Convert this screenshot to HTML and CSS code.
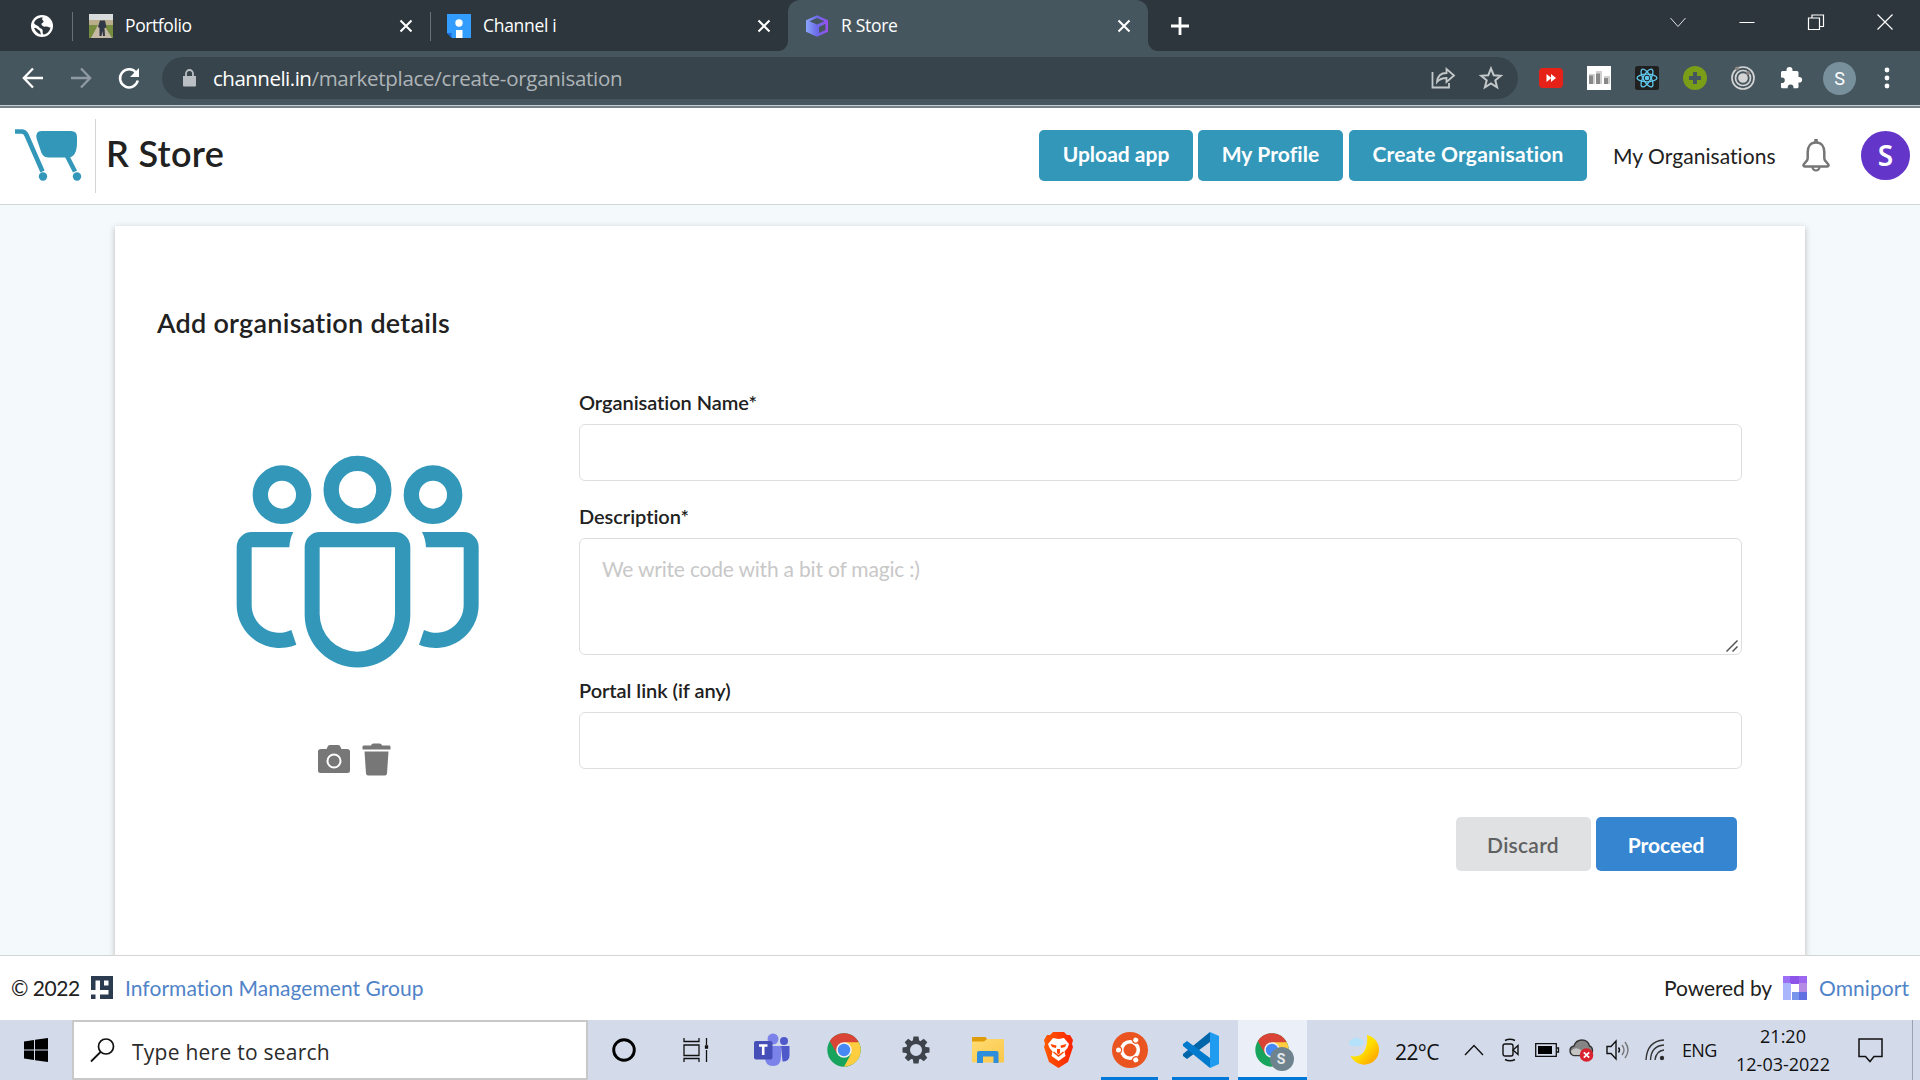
FILE: index.html
```html
<!DOCTYPE html>
<html lang="en">
<head>
<meta charset="utf-8">
<title>R Store</title>
<link rel="stylesheet" href="styles.css">
</head>
<body>
<svg class="defs" width="0" height="0">
  <defs>
    <linearGradient id="cube" x1="0" x2="1"><stop offset="0" stop-color="#8aa6fb"/><stop offset=".5" stop-color="#6b6ae8"/><stop offset="1" stop-color="#9a4ef0"/></linearGradient>
    <linearGradient id="fold" x1="0" x2="1" y2="1"><stop offset="0" stop-color="#ffdc72"/><stop offset="1" stop-color="#f9c74a"/></linearGradient>
    <linearGradient id="lion" x1="0" x2="1"><stop offset="0" stop-color="#ff5a00"/><stop offset="1" stop-color="#fb2200"/></linearGradient>
    <linearGradient id="moon" x1="0" x2="1" y2="1"><stop offset="0" stop-color="#ffec00"/><stop offset=".5" stop-color="#ffde00"/><stop offset="1" stop-color="#ff9000"/></linearGradient>
    <symbol id="chrome" viewBox="0 0 34 34">
      <circle cx="17" cy="17" r="16.7" fill="#18a45c"/>
      <path d="M17 17L2.800 8A16.700 16.700 0 0 1 31.800 9.200z" fill="#da4437"/>
      <path d="M17 9.200H31.800A16.700 16.700 0 0 1 17 33.700L24 21z" fill="#ffcd40"/>
      <path d="M2.800 8L10.200 21 17 17V9.200z" fill="#da4437"/>
      <circle cx="17" cy="17" r="7.800" fill="#f1f1f1"/><circle cx="17" cy="17" r="6.200" fill="#4688f4"/>
    </symbol>
    <symbol id="x" viewBox="0 0 14 14"><path d="M1.500 1.500L12.500 12.500M12.500 1.500L1.500 12.500" stroke="#fff" stroke-width="2.100" fill="none"/></symbol>
  </defs>
</svg>

<div class="tabs">
  <div class="tab pinned">
    <svg width="22" height="22" viewBox="0 0 22 22"><circle cx="11" cy="11" r="11" fill="#fff"/><path d="M12 2.500C8 2 4 4.500 3 8C4 10.500 7 10 8 12C9 14 11 13 11.500 15C12 17 11 18 12.500 19.500C16 19 19 16 19.500 12.500C18 13 17 11 15 11.500C13 12 11 11 10.500 9.500C10 8 13 8 12.500 6C12 5 10 4.500 12 2.500z" fill="#2c363c"/><path d="M3 13C5 17 7 19 10 19.500L9 16L5 13z" fill="#2c363c"/></svg>
  </div>
  <div class="tab">
    <svg class="fav" viewBox="0 0 24 24"><path fill="#d9dcdc" d="M0 0h24v9H0z"/><path fill="#b9ad8c" d="M0 6h24v5H0z"/><path fill="#768c3f" d="M0 11h24v13H0z"/><path fill="#c6b9a5" d="M9 11h6l8 13H2z"/><path fill="#303747" d="M11 6.500h5l1.500 7-2 .5.500 8h-2l-.5-5-1 5h-2V14l-1.500-1z"/></svg>
    <span class="tab-name ls-port">Portfolio</span><svg class="close"><use href="#x"/></svg>
  </div>
  <div class="tab">
    <svg class="fav" viewBox="0 0 24 24"><path fill="#339cff" d="M0 0h24v24H5L0 19z"/><path fill="#1b69d6" d="M0 19h4.500v5z"/><circle cx="12" cy="9" r="3.700" fill="#fff"/><path fill="#fff" d="M9 16h6.500v8H9z"/></svg>
    <span class="tab-name ls-chan">Channel i</span><svg class="close"><use href="#x"/></svg>
  </div>
  <div class="tab active">
    <svg class="fav" viewBox="0 0 24 24"><path fill="url(#cube)" fill-rule="evenodd" d="M12 1.300l11 5v11.500l-11 5-11-5V6.300zM12 4L4.500 7.200 12 10.500l7.500-3.300zM14 13v6l6.500-3V9.800z"/></svg>
    <span class="tab-name ls-store">R Store</span><svg class="close"><use href="#x"/></svg>
  </div>
  <svg class="newtab" width="20" height="20" viewBox="0 0 20 20"><path d="M10 1v18M1 10h18" stroke="#fff" stroke-width="2.800"/></svg>
  <div class="window-controls">
    <svg width="16" height="16"><path d="M.5 4L8 12.500 15.500 4" stroke="#dfe2e4" fill="none"/></svg>
    <svg width="16" height="16"><path d="M.5 8.500h15" stroke="#fff"/></svg>
    <svg width="16" height="16"><path d="M.5 4h11v11.500H.5zM4 4V1h11.500v11.500h-4" stroke="#fff" stroke-width="1.200" fill="none"/></svg>
    <svg width="16" height="16"><path d="M.5.5l15 15M15.500.5l-15 15" stroke="#fff" stroke-width="1.200"/></svg>
  </div>
</div>

<div class="toolbar">
  <svg class="ic"><path d="M22 12H3M12 2.500L2.800 12l9.200 9.500" stroke="#fff" stroke-width="2.300" fill="none"/></svg>
  <svg class="ic"><path d="M2 12h19M12 2.500l9.200 9.500-9.200 9.500" stroke="#8f9aa2" stroke-width="2.300" fill="none"/></svg>
  <svg class="ic"><path d="M19.300 7A9 9 0 1 0 20.800 14.500" stroke="#fff" stroke-width="2.500" fill="none"/><path d="M22 2v9h-9z" fill="#fff"/></svg>
  <div class="omnibox">
    <svg width="13" height="18"><path d="M0 7h13v9.500q0 1-1 1H1q-1 0-1-1z" fill="#babfc3"/><path d="M3 8V4.500a3.500 3.500 0 0 1 7 0V8" stroke="#babfc3" stroke-width="1.800" fill="none"/></svg>
    <span class="url"><b>channeli.in</b><i>/marketplace/create-organisation</i></span>
    <svg class="ic"><path d="M1.500 6v15.500H18V17" stroke="#c3c8cb" stroke-width="1.800" fill="none"/><path d="M6 16c.5-6 4-9 9.500-9V3L23 9.500 15.500 16v-4C11 12 8.500 13 6 16z" stroke="#c3c8cb" stroke-width="1.800" fill="none"/></svg>
    <svg class="ic"><path d="M12 2.500l2.700 6.700 7.100.5-5.500 4.600 1.800 7-6.100-3.800-6.100 3.800 1.800-7L2.200 9.700l7.100-.5z" stroke="#c3c8cb" stroke-width="2" fill="none"/></svg>
  </div>
  <div class="extensions">
    <svg class="ic"><rect y="2" width="24" height="20" rx="4" fill="#e62117"/><path d="M7.500 8l5 4-5 4zM12 8l5 4-5 4z" fill="#fff"/></svg>
    <svg class="ic"><path fill="#fff" d="M0 0h24v24H0z"/><path fill="#d0d0d0" d="M2 8h6v10H2zM9 5h6v13H9zM17 10h6v8h-6z"/><path fill="#888" d="M2 9.500h4V18H2zM9 7.500h4V18H9zM17 12h4v6h-4z"/></svg>
    <svg class="ic" fill="none" stroke="#61c9ee" stroke-width="1.300"><rect width="24" height="24" rx="2.500" fill="#202020" stroke="none"/><ellipse cx="12" cy="12" rx="10" ry="3.800"/><ellipse cx="12" cy="12" rx="10" ry="3.800" transform="rotate(60 12 12)"/><ellipse cx="12" cy="12" rx="10" ry="3.800" transform="rotate(120 12 12)"/><circle cx="12" cy="12" r="1.600" fill="#61c9ee"/></svg>
    <svg class="ic"><circle cx="12" cy="12" r="12" fill="#7b9e18"/><path d="M12 6v12M6 12h12" stroke="#46565f" stroke-width="4"/></svg>
    <svg class="ic" fill="none" stroke="#d4d4d4" stroke-width="1.700"><circle cx="12" cy="12" r="11"/><circle cx="12" cy="12" r="7.500"/><circle cx="12" cy="12" r="4" fill="#d4d4d4"/><circle cx="6" cy="2.500" r="2" fill="#8c8582" stroke="none"/><circle cx="17" cy="7" r="2" fill="#8c8582" stroke="none"/></svg>
    <svg class="ic"><path d="M2 6.500q0-1.500 1.500-1.500H7.500V4a3 3 0 0 1 6 0v1H18q1.500 0 1.500 1.500V11h.8a2.800 2.800 0 0 1 0 5.600h-.8V21q0 1.300-1.500 1.300h-3.500v-1a2.900 2.900 0 0 0-5.800 0v1H3.500Q2 22.300 2 21v-4h1a2.800 2.800 0 0 0 0-5.600H2z" fill="#fff"/></svg>
    <span class="profile">S</span>
    <svg class="ic" fill="#fff"><circle cx="12" cy="4" r="2.400"/><circle cx="12" cy="12" r="2.400"/><circle cx="12" cy="20" r="2.400"/></svg>
  </div>
</div>

<header class="app-header">
  <svg width="68" height="54" viewBox="0 0 68 54"><path d="M0 3.500H6.500Q10 3.500 11.500 7L27.500 43.500" stroke="#3397ba" stroke-width="4.600" fill="none"/><path d="M26.500 3H56Q62 3 62 9V14Q62 29.500 53 29.500H34Q28.500 29.500 26.500 25L21.700 11Q20 3 26.500 3z" fill="#3397ba"/><path d="M52 28L60 43.500" stroke="#3397ba" stroke-width="4.500"/><circle cx="28" cy="48.500" r="4.200" fill="#3397ba"/><circle cx="62" cy="48.500" r="4.200" fill="#3397ba"/></svg>
  <h1 class="app-name">R Store</h1>
  <nav class="nav">
    <button class="teal upload">Upload app</button>
    <button class="teal prof">My Profile</button>
    <button class="teal create">Create Organisation</button>
  </nav>
  <span class="my-orgs">My Organisations</span>
  <svg class="bell" width="28" height="33" viewBox="0 0 28 33"><path d="M14 3.500C8.500 3.500 5.700 7.500 5.700 13V19.500C5.700 22.500 1.500 24 1.500 26.300Q1.500 27.500 3 27.500H25Q26.500 27.500 26.500 26.300C26.500 24 22.300 22.500 22.300 19.500V13C22.300 7.500 19.500 3.500 14 3.500z" stroke="#767676" stroke-width="2.500" fill="none"/><path d="M14 0v4" stroke="#767676" stroke-width="3.600"/><path d="M10.500 28a3.500 3.500 0 0 0 7 0" stroke="#767676" stroke-width="2.200" fill="none"/></svg>
  <span class="user">S</span>
</header>

<main class="page">
  <section class="card">
    <h2 class="card-title">Add organisation details</h2>
    <div class="card-body">
      <div class="logo-picker">
        <svg width="250" height="217" viewBox="100 70 750 651" fill="#3397ba">
          <g fill="none" stroke="#3397ba" stroke-width="46"><circle cx="473.500" cy="180" r="79"/><circle cx="247" cy="195" r="65"/><circle cx="700" cy="195" r="65"/></g>
          <path fill-rule="evenodd" d="M360 307H587A45 45 0 0 1 632 352V555A158.500 158.500 0 0 1 315 555V352A45 45 0 0 1 360 307zM360 353V553A113 113 0 0 0 586 553V353z"/>
          <path id="side" d="M281 307H156A45 45 0 0 0 111 352V525A129 129 0 0 0 290 645L275 601A83 83 0 0 1 156 525V353H269Q270 328 281 307z"/>
          <use href="#side" transform="translate(948 0) scale(-1 1)"/>
        </svg>
        <div class="logo-actions">
          <svg width="32" height="32" viewBox="0 0 32 32"><path fill="#777" d="M3 6H8.500L10 3Q10.500 2 12 2H20Q21.500 2 22 3L23.500 6H29Q32 6 32 8.500V27.500Q32 30 29.500 30H2.500Q0 30 0 27.500V8.500Q0 6 3 6z"/><circle cx="16" cy="18" r="6.500" stroke="#fff" stroke-width="2" fill="none"/></svg>
          <svg width="29" height="33" viewBox="0 0 29 33"><path fill="#777" d="M1.500 2.500H9Q9.500.5 11.500.500H17.500Q19.500.5 20 2.500H27.500Q28.500 2.500 28.500 4V6.500H.500V4Q.500 2.500 1.500 2.500zM2.500 8.500H26.500L25 30.500Q24.700 32.500 23 32.500H6Q4.300 32.500 4 30.500z"/></svg>
        </div>
      </div>
      <form class="form">
        <label class="field"><span class="label">Organisation Name*</span><input class="control" type="text"></label>
        <label class="field"><span class="label">Description*</span><span class="area-wrap"><textarea class="control area" placeholder="We write code with a bit of magic :)"></textarea><svg class="grip" width="12" height="12"><path d="M.5 11.500l11-11M6.500 11.500l5-5" stroke="#555" stroke-width="1.500"/></svg></span></label>
        <label class="field"><span class="label">Portal link (if any)</span><input class="control" type="text"></label>
        <div class="actions"><button type="button" class="discard">Discard</button><button type="button" class="proceed">Proceed</button></div>
      </form>
    </div>
  </section>
</main>

<footer class="site-footer">
  <span class="copy">© 2022</span>
  <svg class="img-logo" width="22" height="23" viewBox="0 0 22 23"><path fill="#2b3b50" fill-rule="evenodd" d="M0 0H22V23H9V18.500H17.500V14H9V4.500H4.500V14H0zM13 4.500V9.500H17.500V4.500zM0 18.500H4.500V23H0z"/></svg>
  <a>Information Management Group</a>
  <span class="powered">Powered by</span>
  <svg class="omni-logo" width="24" height="24" viewBox="0 0 24 24"><path fill="#9b6ff5" d="M0 0h8v8H0z"/><path fill="#8c54e8" d="M7 0h10v8H7z"/><path fill="#9d66ee" d="M16 0h8v8h-8z"/><path fill="#a9b6fd" d="M0 7h8v17H0z"/><path fill="#b48ae4" d="M16 7h8v10h-8z"/><path fill="#7795ea" d="M9 16h8v8H9z"/><path fill="#616fe0" d="M16 16h8v8h-8z"/></svg>
  <a>Omniport</a>
</footer>

<div class="taskbar">
  <div class="task start"><svg width="24" height="24"><path d="M0 3.500L10 2v9.500H0zM11 1.800L24 0v11.500H11zM0 12.500h10V22L0 20.500zM11 12.500h13V24l-13-1.800z"/></svg></div>
  <div class="search"><svg width="24" height="24"><circle cx="16" cy="8.500" r="7.500" stroke="#111" stroke-width="1.700" fill="none"/><path d="M10.500 14L1 23.500" stroke="#111" stroke-width="1.800"/></svg><span>Type here to search</span></div>
  <div class="task"><svg width="24" height="24"><circle cx="12" cy="12" r="10.300" stroke="#000" stroke-width="2.900" fill="none"/></svg></div>
  <div class="task"><svg width="26" height="24" fill="none" stroke="#111" stroke-width="1.300"><path d="M1 0v3.500h15V0M1 7h15v10.500H1zM1 24v-3.500h15V24M23.500 0v7M23.500 12v12"/><path fill="#111" d="M22.500 8h2v2h-2z"/></svg></div>
  <div class="task teams"><svg width="36" height="34" viewBox="0 0 36 34"><circle cx="30" cy="8" r="4" fill="#5059c9"/><path d="M27 13h8.500v9.500q0 6-7 6z" fill="#5059c9"/><circle cx="19" cy="6" r="5.500" fill="#7b83eb"/><path d="M11 13h16v11q0 9-8 9t-8-9z" fill="#7b83eb"/><rect y="8" width="18.500" height="18.500" rx="2" fill="#464eb8"/><path d="M5 12.500h8.500M9.200 12.500v9.500" stroke="#fff" stroke-width="2.600"/></svg></div>
  <div class="task"><svg width="34" height="34"><use href="#chrome"/></svg></div>
  <div class="task"><svg width="28" height="28" viewBox="-14 -14 28 28" fill="#3f444c"><g id="tooth"><path id="t" d="M-2.500-13.500h5l.8 5h-6.600z"/><use href="#t" transform="rotate(180)"/></g><use href="#tooth" transform="rotate(45)"/><use href="#tooth" transform="rotate(90)"/><use href="#tooth" transform="rotate(135)"/><circle r="8" fill="none" stroke="#3f444c" stroke-width="4"/></svg></div>
  <div class="task"><svg width="32" height="28" viewBox="0 0 32 28"><path d="M0 2q0-1 1-1h12q1 0 2 2v3H0z" fill="#e09b0b"/><path d="M0 5.500h12l3-2.500h16q1 0 1 1v21.500q0 1-1 1H1q-1 0-1-1z" fill="url(#fold)"/><path d="M5 27V17q0-2 2-2h17.500q2 0 2 2v10h-5v-6.500H11V27z" fill="#2f8edb"/></svg></div>
  <div class="task narrow brave"><svg width="31" height="36" viewBox="0 0 31 36"><path d="M10 0h11l3 3h3l3 5-1 4 1 3-5 15-9.500 6L6 30 1 15l1-3-1-4 3-5h3z" fill="url(#lion)"/><path d="M15.500 7l5.500-1 5 6-1.500 4-3 3.500 1 4.500-7 5-7-5 1-4.500-3-3.500L5 12l5-6z" fill="#fff"/><path d="M7.500 12l6 1.500-.5 2.500-4-1zM23.500 12l-6 1.500.5 2.500 4-1zM14 17h3v4l-1.500 1.500L14 21z" fill="#ff4500"/><path d="M10.500 20l5 4 5-4" stroke="#ff4500" stroke-width="1.500" fill="none"/></svg></div>
  <div class="task narrow run"><svg width="36" height="36" viewBox="-18 -18 36 36"><circle r="18" fill="#e95420"/><circle r="8.300" fill="none" stroke="#fff" stroke-width="3.600"/><g id="friend"><circle cx="-11.500" r="3.700" fill="#e95420"/><circle cx="-11.500" r="2.500" fill="#fff"/></g><use href="#friend" transform="rotate(120)"/><use href="#friend" transform="rotate(240)"/></svg></div>
  <div class="task narrow run"><svg width="36" height="36" viewBox="0 0 36 36"><path d="M27 0v10L4 27l-4-3v-2z" fill="#0065a9"/><path d="M0 12l4-3 23 17v10L0 14z" fill="#007acc"/><path d="M27 0l9 4v28l-9 4z" fill="#1f9cf0"/></svg></div>
  <div class="task current"><svg width="44" height="44" viewBox="0 0 44 44"><use href="#chrome" x="4" y="5" width="34" height="34"/><circle cx="31" cy="31" r="12" fill="#6f838f"/></svg><span class="badge">S</span></div>
  <div class="tray">
    <svg class="moon" width="30" height="30" viewBox="0 0 30 30"><path d="M18 0A15 15 0 1 1 1.500 21Q12 23 16 15 19 8 18 0z" fill="url(#moon)"/><path d="M3 11a3 3 0 0 1 0-6 4 4 0 0 1 7-1 3 3 0 0 1 2 7z" fill="#b5e1fa"/></svg>
    <span class="temp">22°C</span>
    <svg class="up" width="20" height="12"><path d="M1 11l9-9.500L19 11" stroke="#111" stroke-width="1.400" fill="none"/></svg>
    <svg class="meet" width="18" height="24" fill="none" stroke="#111" stroke-width="1.400"><rect x="1" y="6" width="10" height="12" rx="2"/><path d="M11 12l5-4.500v9zM3 2.500Q8 0 13 2.500M3 21.500Q8 24 13 21.500"/></svg>
    <svg class="battery" width="24" height="14"><path d="M.7.7h20.600v12.600H.7zM22 5h1.500v4H22" fill="none" stroke="#111" stroke-width="1.300"/><path d="M3 3h14v8H3z"/></svg>
    <svg class="cloud" width="25" height="24" viewBox="0 0 25 24"><path d="M5 17.500Q1 16.500 1 12.500 1 9 5 8 7 2 13 2 19 2 20.500 8 23.500 9 23.500 13 23 17.500 19 17.500z" fill="#858585" stroke="#333" stroke-width="1.400"/><path d="M2 13Q6 8 12 12L19 17H5Q2 16 2 13z" fill="#c4c4c4"/><circle cx="17.500" cy="17" r="6.800" fill="#d92430"/><path d="M14.800 14.300l5.400 5.400M20.200 14.300l-5.400 5.400" stroke="#fff" stroke-width="1.700"/></svg>
    <svg class="speaker" width="24" height="22" fill="none" stroke="#111" stroke-width="1.400"><path d="M1 7.500h4l5-5.500v18l-5-5.500H1z"/><path d="M12.500 8.500q2 2.500 0 5"/><path stroke="#777" d="M16 6q4 5 0 10M19 3q6 8 0 16"/></svg>
    <svg class="wifi" width="20" height="22" fill="none" stroke="#333" stroke-width="1.400"><path d="M1 21Q2 2 19 1M5.500 21Q6 7 19 6M10 21Q11 12 19 11"/><circle cx="17" cy="19" r="1.500" fill="#111"/></svg>
    <span class="lang">ENG</span>
    <div class="clock"><span class="time">21:20</span><span class="date">12-03-2022</span></div>
    <svg class="notes" width="25" height="25"><path d="M1 1h23v17.500h-8L12 23.500l-4.500-5H1z" fill="none" stroke="#111" stroke-width="1.500"/></svg>
    <div class="peek"></div>
  </div>
</div>
</body>
</html>
```
FILE: styles.css
```css
* { box-sizing: border-box; }
body {
  margin: 0;
  width: 1920px;
  height: 1080px;
  overflow: hidden;
  display: flex;
  flex-direction: column;
  font-family: Lato, sans-serif;
  font-size: 21px;
  font-variant-ligatures: none;
  color: #212121;
  background: #f4f9fc;
}
svg { flex: none; overflow: visible; }
.defs { position: absolute; }
button { border: 0; padding: 0; font-family: inherit; font-size: 21px; font-weight: 700; border-radius: 5px; }
h1, h2 { margin: 0; }
.tabs, .toolbar, .taskbar { font-family: "Open Sans", sans-serif; }

/* browser tabs */
.tabs { display: flex; align-items: center; height: 51px; flex: none; background: #2c363c; color: #fff; }
.tab { display: flex; align-items: center; width: 358px; height: 51px; padding-left: 17px; }
.tab + .tab:not(.active) { background: linear-gradient(#66717a, #66717a) 0 12px / 1px 29px no-repeat; }
.tab.pinned { width: 72px; padding-left: 31px; }
.tab.active { position: relative; width: 360px; background: #46565f; border-radius: 12px 12px 0 0; }
.tab.active::before, .tab.active::after { content: ""; position: absolute; bottom: 0; width: 10px; height: 10px; }
.tab.active::before { left: -10px; background: radial-gradient(circle at 0 0, #2c363c 9.5px, #46565f 10.5px); }
.tab.active::after { right: -10px; background: radial-gradient(circle at 100% 0, #2c363c 9.5px, #46565f 10.5px); }
.fav { width: 24px; height: 24px; margin-right: 12px; }
.tab-name { flex: 1; height: 50px; font-size: 17.500px; line-height: 48px; white-space: nowrap; }
.ls-port { letter-spacing: -0.4px; }
.ls-chan { letter-spacing: -0.3px; }
.ls-store { letter-spacing: -0.3px; }
.close { width: 14px; height: 14px; margin-right: 17px; }
.newtab { margin-left: 22px; }
.window-controls { display: flex; gap: 53px; margin: -8px 27px 0 auto; }

/* browser toolbar */
.toolbar { display: flex; align-items: center; gap: 24px; height: 57px; flex: none; padding: 0 0 1px 21px; background: #46565f; border-bottom: 2px solid #73818b; box-shadow: inset 0 -1px #c9cdd2; }
.ic { width: 24px; height: 24px; }
.omnibox { display: flex; align-items: center; width: 1356px; height: 42px; margin-left: -3px; padding: 0 15px 0 21px; border-radius: 21px; background: #38444b; }
.url { flex: 1; margin-left: 17px; font-size: 20.500px; line-height: 40px; white-space: nowrap; }
.url b { font-weight: 400; color: #fff; letter-spacing: -0.5px; }
.url i { font-style: normal; color: #aeb4b8; letter-spacing: -0.28px; }
.omnibox .ic + .ic { margin-left: 24px; }
.extensions { display: flex; align-items: center; gap: 24px; margin-left: -3px; }
.profile { width: 33px; height: 33px; margin: 0 -5px 0 -4px; border-radius: 50%; background: #78909c; color: #fff; font: 18px/33px Roboto, sans-serif; text-align: center; }

/* application header */
.app-header { display: flex; align-items: center; height: 97px; flex: none; padding: 0 10px 2px 15px; background: #fff; border-bottom: 1px solid #d4d4d5; }
.app-name { height: 74px; margin: 1px 0 0 12px; padding-left: 10px; border-left: 1px solid #d4d4d5; font-size: 36px; font-weight: 600; letter-spacing: .3px; line-height: 69px; white-space: nowrap; }
.nav { display: flex; gap: 5px; margin-left: auto; }
.teal { height: 51px; padding-bottom: 3px; background: #3397ba; color: #fff; line-height: 48px; white-space: nowrap; }
.upload { width: 154px; }
.prof { width: 145px; letter-spacing: .1px; }
.create { width: 238px; margin-left: 1px; letter-spacing: .2px; }
.my-orgs { width: 215px; padding-left: 26px; letter-spacing: .05px; white-space: nowrap; }
.user { width: 49px; height: 49px; margin-left: 31px; border-radius: 50%; background: #6435c9; color: #fff; font: 28px/48px "Noto Sans", sans-serif; font-weight: 600; text-align: center; }

/* form card */
.page { flex: 1; min-height: 0; padding: 21px 115px 0; overflow: hidden; }
.card { height: 900px; padding: 81px 63px 0 42px; background: #fff; box-shadow: 0 2px 6px rgba(34, 36, 38, .3); }
.card-title { font-size: 27px; font-weight: 600; letter-spacing: .25px; line-height: 32px; }
.card-body { display: flex; margin-top: 54px; }
.logo-picker { width: 422px; padding: 60px 0 0 76px; }
.logo-picker > svg { display: block; }
.logo-actions { display: flex; gap: 12px; margin: 73px 0 0 85px; }
.form { flex: 1; }
.field { display: block; margin-bottom: 26px; }
.label { display: block; height: 20px; margin-bottom: 11px; font-size: 20px; font-weight: 600; line-height: 19px; letter-spacing: -.05px; }
.control { display: block; width: 1163px; height: 57px; border: 1px solid #dededf; border-radius: 6px; background: #fff; font: 21px/27px Lato, sans-serif; padding: 16px 22px; }
.area-wrap { display: block; position: relative; width: 1163px; }
.area { height: 117px; resize: none; letter-spacing: -.2px; }
.grip { position: absolute; right: 4px; bottom: 3px; }
.control::placeholder { color: #c8c8c8; opacity: 1; }
.actions { display: flex; justify-content: flex-end; gap: 5px; margin: 48px 5px 0 0; }
.discard { width: 135px; height: 54px; padding-right: 1px; background: #e0e1e2; color: #5f6061; font-weight: 600; letter-spacing: .25px; }
.proceed { width: 141px; height: 54px; padding-right: 1px; background: #3685d1; color: #fff; }

/* footer */
.site-footer { display: flex; align-items: center; height: 65px; flex: none; padding: 0 11px 1px; background: #fff; border-top: 1px solid #d4d4d5; white-space: nowrap; }
.site-footer a { color: #5083c8; letter-spacing: .05px; }
.copy { width: 69px; letter-spacing: -.5px; }
.img-logo { margin: 0 12px 0 11px; }
.powered { margin-left: auto; letter-spacing: -.1px; }
.omni-logo { margin: 0 12px 0 11px; }

/* taskbar */
.taskbar { display: flex; height: 60px; flex: none; background: #d3dbeb; color: #111; white-space: nowrap; }
.task { display: flex; align-items: center; justify-content: center; width: 72px; height: 60px; flex: none; }
.teams { margin-left: 4px; }
.narrow { width: 71px; }
.brave { margin-left: -1px; }
.run { background: linear-gradient(#0078d7, #0078d7) 50% 100% / 57px 3px no-repeat; }
.current { position: relative; width: 69px; margin-left: 2px; background: #ebeff7; border-bottom: 3px solid #0078d7; padding-top: 3px; }
.badge { position: absolute; left: 31px; top: 27px; width: 24px; font: 700 14px/24px Roboto, sans-serif; color: #e3e8eb; text-align: center; }
.search { display: flex; align-items: center; gap: 18px; width: 516px; height: 60px; flex: none; padding-left: 16px; background: #fff; border: 2px solid #c8c8c8; font-size: 21px; color: #2b2b2b; }
.search span { padding-top: 3px; letter-spacing: .25px; }
.tray { display: flex; align-items: center; flex: 1; font-size: 18px; }
.moon { margin-left: 42px; }
.temp { width: 44px; margin-left: 16px; padding-top: 3px; font-size: 21px; letter-spacing: -.6px; }
.up { margin-left: 25px; }
.meet { margin-left: 18px; }
.battery { margin-left: 15px; }
.cloud { margin-left: 10px; }
.speaker { margin-left: 12px; }
.wifi { margin-left: 15px; }
.lang { width: 36px; margin-left: 17px; letter-spacing: -.7px; }
.clock { display: flex; flex-direction: column; align-items: center; width: 96px; margin-left: 17px; line-height: 28px; }
.notes { margin-left: 27px; }
.peek { width: 1px; height: 60px; margin-left: 29px; background: #9aa3b3; }
```
